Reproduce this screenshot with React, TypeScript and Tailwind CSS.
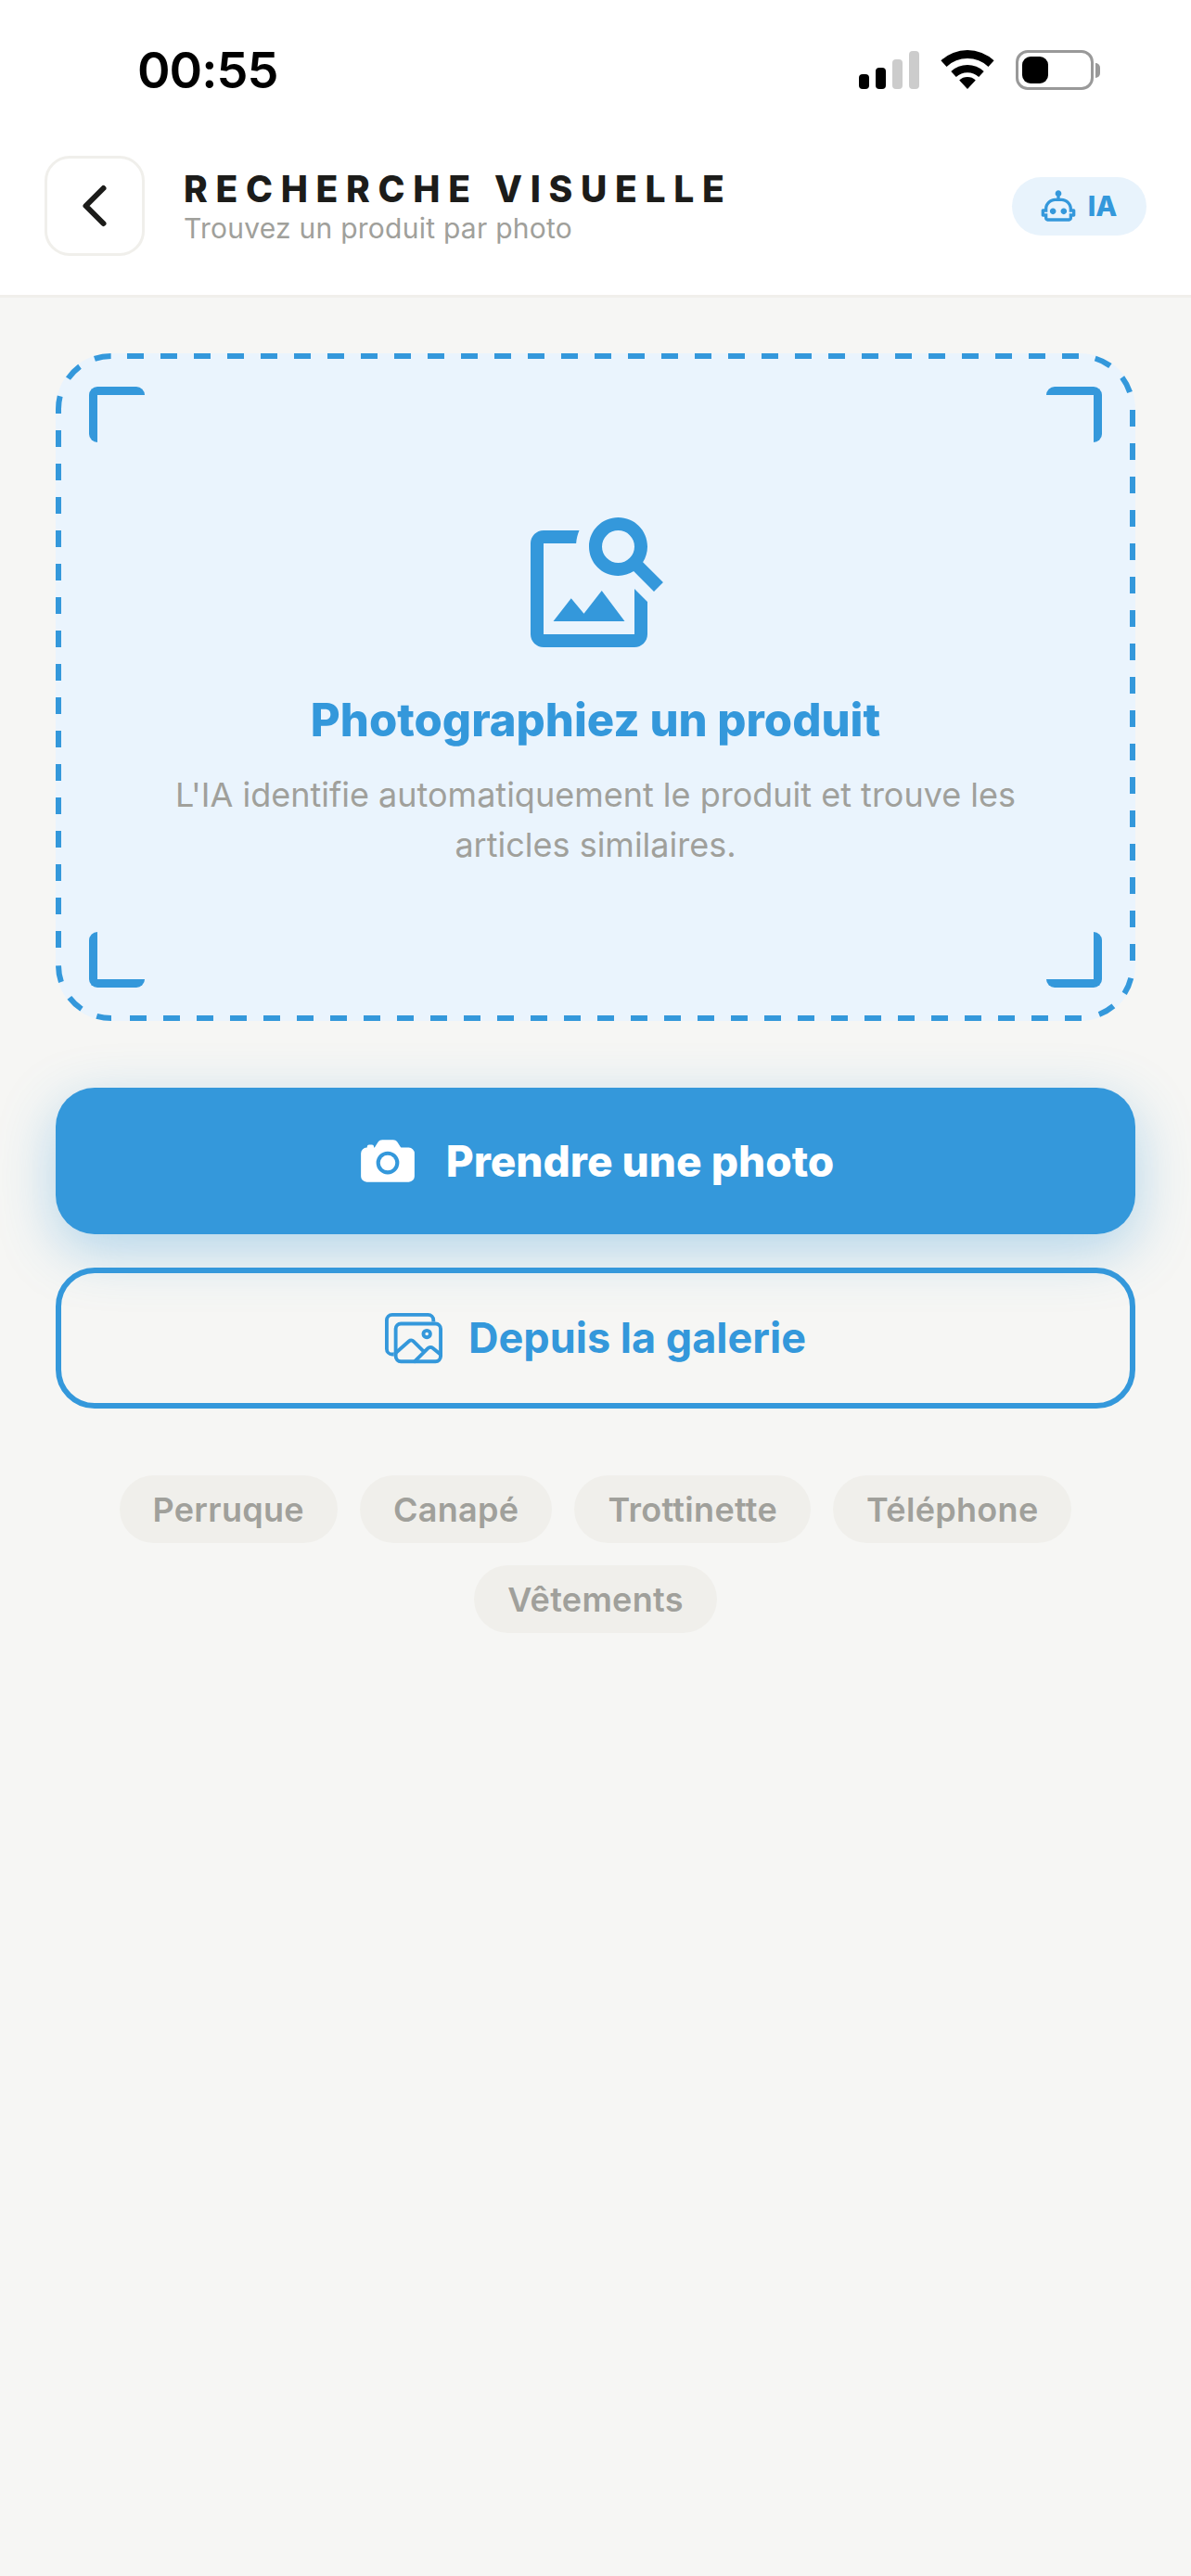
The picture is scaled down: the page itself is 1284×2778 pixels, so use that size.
import { IoCamera, IoImagesOutline } from "react-icons/io5";
import { MdOutlineImageSearch } from "react-icons/md";

const CHIPS = ["Perruque", "Canapé", "Trottinette", "Téléphone", "Vêtements"];

// border of the drop zone: each edge and corner carries its own dash phase
const DASHES = [
  { d: "M77 3H1103", dash: "18 18" },
  { d: "M1104 3A57 57 0 0 1 1161 60", dash: "0 17 18 18 18 18" },
  { d: "M1161 61V655", dash: "18 18" },
  { d: "M1161 660A57 57 0 0 1 1104 717", dash: "0 14 18 18 18 18" },
  { d: "M80 717H1106", dash: "18 18" },
  { d: "M60 717A57 57 0 0 1 3 660", dash: "16 18 18 19 18" },
  { d: "M3 83V641", dash: "18 18" },
  { d: "M3 65V60A57 57 0 0 1 60 3", dash: "19 21 18 18 18" },
];

function Signal() {
  return (
    <div className="flex items-end gap-[7px]">
      <div className="w-[11px] h-[16px] rounded-[4px] bg-black" />
      <div className="w-[11px] h-[23px] rounded-[4px] bg-black" />
      <div className="w-[11px] h-[32px] rounded-[4px] bg-[#cccccc]" />
      <div className="w-[11px] h-[41px] rounded-[4px] bg-[#cccccc]" />
    </div>
  );
}

function Wifi() {
  return (
    <svg width="58" height="43" viewBox="0 0 58 43" fill="#000">
      <path d="M.4 11.3A42 42 0 0 1 57.6 11.3L51.5 17.9A33 33 0 0 0 6.5 17.9Z" />
      <path d="M11.3 23A26 26 0 0 1 46.7 23L41.2 28.9A18 18 0 0 0 16.8 28.9Z" />
      <path d="M20.2 32.5A13 13 0 0 1 37.8 32.5L29 42Z" />
    </svg>
  );
}

function Battery() {
  return (
    <div className="flex items-center">
      <div className="w-[84px] h-[43px] rounded-[13px] border-[3px] border-[#999999] p-[4px] bg-white">
        <div className="w-[28px] h-full rounded-[9px] bg-black" />
      </div>
      <div className="w-[5px] h-[16px] ml-[2px] rounded-r-full bg-[#999999]" />
    </div>
  );
}

function Bot() {
  return (
    <svg width="40" height="40" viewBox="0 0 24 24" fill="#3498db">
      <path d="M17.5 15.5C17.5 16.61 16.61 17.5 15.5 17.5S13.5 16.61 13.5 15.5 14.4 13.5 15.5 13.5 17.5 14.4 17.5 15.5M8.5 13.5C7.4 13.5 6.5 14.4 6.5 15.5S7.4 17.5 8.5 17.5 10.5 16.61 10.5 15.5 9.61 13.5 8.5 13.5M23 15V18C23 18.55 22.55 19 22 19H21V20C21 21.11 20.11 22 19 22H5C3.9 22 3 21.11 3 20V19H2C1.45 19 1 18.55 1 18V15C1 14.45 1.45 14 2 14H3C3 10.13 6.13 7 10 7H11V5.73C10.4 5.39 10 4.74 10 4C10 2.9 10.9 2 12 2S14 2.9 14 4C14 4.74 13.6 5.39 13 5.73V7H14C17.87 7 21 10.13 21 14H22C22.55 14 23 14.45 23 15M21 16H19V14C19 11.24 16.76 9 14 9H10C7.24 9 5 11.24 5 14V16H3V17H5V20H19V17H21V16Z" />
    </svg>
  );
}

export default function App() {
  return (
    <div className="w-[1284px] h-[2778px] flex flex-col bg-[#f6f6f4] font-['Inter',sans-serif] overflow-hidden">
      {/* Status bar + header */}
      <header className="bg-white border-b-[3px] border-[#f0efeb]">
        <div className="h-[132px] flex items-center justify-between pt-[19px] pl-[148px] pr-[98px]">
          <span className="text-[54px] leading-none font-semibold text-black tracking-[-1px]">00:55</span>
          <div className="flex items-center gap-[23px]">
            <Signal />
            <Wifi />
            <Battery />
          </div>
        </div>
        <div className="flex items-center pt-[36px] pb-[42px] px-[48px]">
          <button className="w-[108px] h-[108px] flex items-center justify-center rounded-[27px] border-[3px] border-[#f0efeb] bg-white">
            <svg width="36" height="54" viewBox="0 0 36 54" fill="none" stroke="#1c1c1a" strokeWidth="6" strokeLinecap="round" strokeLinejoin="round">
              <path d="M27.5 8 L8.5 27 L27.5 46" />
            </svg>
          </button>
          <div className="ml-[42px] flex-1">
            <h1 className="text-[39px] leading-[46px] font-extrabold tracking-[8.7px] text-[#1c1c1a]">RECHERCHE VISUELLE</h1>
            <p className="mt-[1px] text-[30px] leading-[36px] tracking-[0.25px] text-[#a0a09b]">Trouvez un produit par photo</p>
          </div>
          <div className="h-[63px] w-[145px] flex items-center justify-center gap-[12px] pr-[2px] rounded-full bg-[#e8f3fc]">
            <Bot />
            <span className="text-[30px] font-extrabold text-[#3498db]">IA</span>
          </div>
        </div>
      </header>

      <main className="px-[60px] pt-[60px]">
        {/* Drop zone */}
        <div className="relative h-[720px] rounded-[60px] bg-[#eaf4fd] flex flex-col items-center justify-center">
          <svg className="absolute inset-0" width="1164" height="720" viewBox="0 0 1164 720" fill="none" stroke="#3498db" strokeWidth="6">
            {DASHES.map((s) => (
              <path key={s.d} d={s.d} strokeDasharray={s.dash} />
            ))}
          </svg>
          <div className="absolute top-[36px] left-[36px] w-[60px] h-[60px] rounded-[9px] border-t-[9px] border-l-[9px] border-[#3498db]" />
          <div className="absolute top-[36px] right-[36px] w-[60px] h-[60px] rounded-[9px] border-t-[9px] border-r-[9px] border-[#3498db]" />
          <div className="absolute bottom-[36px] left-[36px] w-[60px] h-[60px] rounded-[9px] border-b-[9px] border-l-[9px] border-[#3498db]" />
          <div className="absolute bottom-[36px] right-[36px] w-[60px] h-[60px] rounded-[9px] border-b-[9px] border-r-[9px] border-[#3498db]" />
          <MdOutlineImageSearch size={168} color="#3498db" />
          <h2 className="mt-[35px] text-[49px] leading-[60px] font-extrabold text-[#3498db]">Photographiez un produit</h2>
          <p className="mt-[23px] w-[980px] text-center text-[36px] leading-[54px] text-[#a0a09b]">
            L'IA identifie automatiquement le produit et trouve les articles similaires.
          </p>
        </div>

        {/* Actions */}
        <button className="mt-[72px] w-full h-[158px] flex items-center justify-center gap-[30px] rounded-[42px] bg-[#3498db] shadow-[0_18px_60px_rgba(52,152,219,0.35)]">
          <IoCamera size={66} color="#fff" />
          <span className="text-[46px] font-extrabold text-white">Prendre une photo</span>
        </button>
        <button className="mt-[36px] w-full h-[152px] flex items-center justify-center gap-[28px] rounded-[42px] border-[6px] border-[#3498db]">
          <IoImagesOutline size={62} color="#3498db" />
          <span className="text-[45px] font-bold text-[#3498db]">Depuis la galerie</span>
        </button>

        {/* Suggestions */}
        <div className="mt-[72px] flex flex-wrap justify-center gap-[24px]">
          {CHIPS.map((c) => (
            <span key={c} className="h-[73px] px-[36px] flex items-center rounded-full bg-[#f0efeb] text-[36px] tracking-[0.3px] font-semibold text-[#a0a09b]">
              {c}
            </span>
          ))}
        </div>
      </main>
    </div>
  );
}
